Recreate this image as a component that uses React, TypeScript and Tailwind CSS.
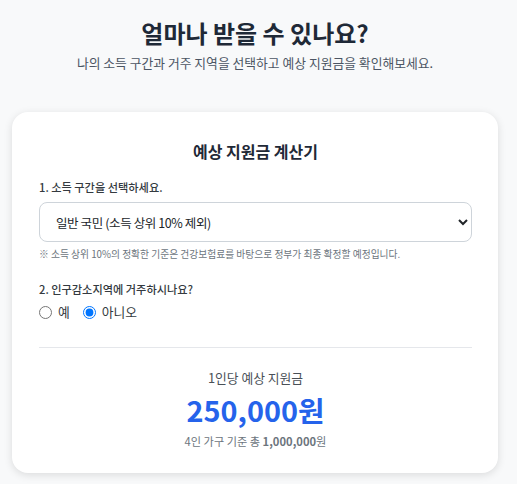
export default function App() {
  return (
    <div
      className="min-h-screen bg-[#f8f9fa] pt-[17px] pb-6 text-[#212529]"
      style={{ fontFamily: '"Noto Sans CJK KR", "Noto Sans", sans-serif' }}
    >
      <div className="ml-[12px] w-[486px]">
        {/* Header */}
        <div className="text-center">
          <h1 className="text-[24px] font-bold leading-[32px] text-[#1f2937]">얼마나 받을 수 있나요?</h1>
          <p className="mt-[4px] text-[12.8px] leading-[20px] text-[#4b5563]">
            나의 소득 구간과 거주 지역을 선택하고 예상 지원금을 확인해보세요.
          </p>
        </div>

        {/* Calculator card */}
        <div className="mt-[39px] rounded-2xl bg-white pl-[27px] pr-[26px] pt-[27px] pb-[24px] shadow-[0_2px_8px_rgba(0,0,0,0.12)]">
          <h2 className="text-center text-[16px] font-bold leading-[24px] text-[#1f2937]">예상 지원금 계산기</h2>

          <div className="mt-[15px]">
            <label className="block text-[11.2px] font-medium leading-[18px] text-[#343a40]">1. 소득 구간을 선택하세요.</label>
            <select
              defaultValue="general"
              className="mt-[6px] block h-[40px] w-full rounded-lg border border-[#ced4da] bg-white pl-[12px] pr-[9px] text-[12.5px] tracking-[-0.4px] text-[#212529]"
            >
              <option value="general">일반 국민 (소득 상위 10% 제외)</option>
              <option value="low">차상위계층</option>
              <option value="basic">기초생활수급자</option>
            </select>
            <p className="mt-[5px] text-[9.75px] leading-[14px] text-[#6c757d]">
              ※ 소득 상위 10%의 정확한 기준은 건강보험료를 바탕으로 정부가 최종 확정할 예정입니다.
            </p>
          </div>

          <div className="mt-[19px]">
            <label className="block text-[11.2px] font-medium leading-[18px] text-[#343a40]">2. 인구감소지역에 거주하시나요?</label>
            <div className="mt-[4px] flex items-center gap-[13px] text-[12.8px] leading-[20px] text-[#343a40]">
              <label className="flex items-center gap-[6px]">
                <input type="radio" name="region" className="m-0 h-[13px] w-[13px]" />
                예
              </label>
              <label className="flex items-center gap-[6px]">
                <input type="radio" name="region" defaultChecked className="m-0 h-[13px] w-[13px]" />
                아니오
              </label>
            </div>
          </div>

          <div className="mt-[25px] border-t border-[#e5e7eb] pt-[21px] text-center">
            <p className="text-[12.8px] leading-[18px] text-[#495057]">1인당 예상 지원금</p>
            <p className="mt-[5px] text-[28.8px] font-bold leading-[36px] text-[#2563eb]">250,000원</p>
            <p className="mt-[5px] text-[11.2px] leading-[16px] text-[#6c757d]">
              4인 가구 기준 총 <span className="font-bold">1,000,000</span>원
            </p>
          </div>
        </div>
      </div>
    </div>
  );
}
